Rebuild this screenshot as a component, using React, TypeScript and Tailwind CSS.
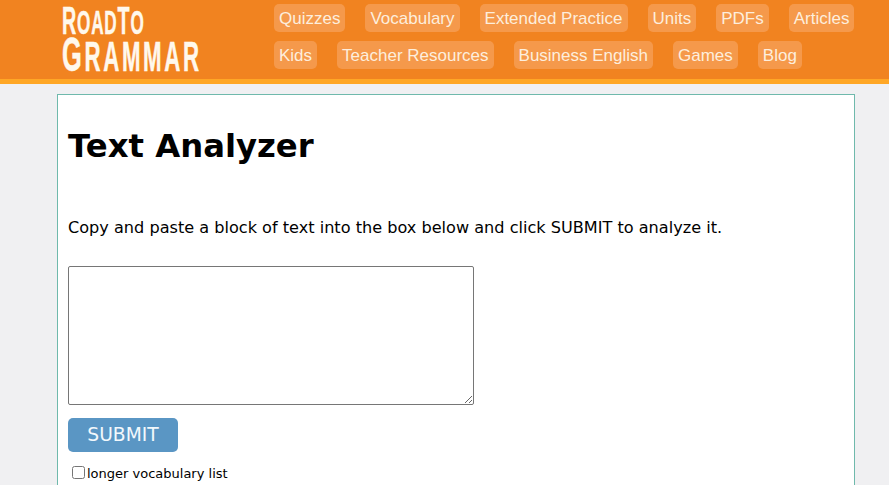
const links = [
  ['Quizzes', 'Vocabulary', 'Extended Practice', 'Units', 'PDFs', 'Articles'],
  ['Kids', 'Teacher Resources', 'Business English', 'Games', 'Blog'],
];

function Logo() {
  return (
    <div className="w-[212px] shrink-0 pt-[4px] text-[#fff8ec] font-['Liberation_Sans',sans-serif] font-bold [-webkit-text-stroke:0.5px_#fff8ec]">
      <div className="h-[32px] w-[138px] origin-top-left scale-x-[0.52] text-[38px] leading-[34px] tracking-[1.5px] whitespace-nowrap">
        <span>R</span>
        <span className="text-[33px]">OAD</span>
        <span>T</span>
        <span className="text-[33px]">O</span>
      </div>
      <div className="h-[38px] w-[138px] origin-top-left scale-x-[0.53] text-[48px] leading-[38px] tracking-[5px] whitespace-nowrap">
        <span>G</span>
        <span className="text-[42px]">RAMMAR</span>
      </div>
    </div>
  );
}

export default function App() {
  return (
    <div className="h-[485px] overflow-hidden bg-[#f0f0f2] font-['DejaVu_Sans',Verdana,sans-serif]">
      <header className="flex h-[84px] border-b-[5px] border-[#ffa726] bg-[#f18320] pl-[62px]">
        <Logo />
        <nav className="flex flex-col gap-[9px] pt-1 font-['Liberation_Sans',sans-serif] text-[17px] text-[#fdeedd]">
          {links.map((row, i) => (
            <div key={i} className="flex gap-[20px]">
              {row.map((l) => (
                <a key={l} className="flex h-7 items-center rounded-[5px] bg-[#f5994b] px-[5px] pt-px">
                  {l}
                </a>
              ))}
            </div>
          ))}
        </nav>
      </header>
      <main className="mx-[57px] mt-[10px] h-[500px] w-[798px] border border-[#6fb9ac] bg-white px-[10px] text-black">
        <h1 className="mt-[29px] text-[32.3px] leading-[44px] font-bold">Text Analyzer</h1>
        <p className="mt-[48px] text-[16.13px] leading-[24px]">
          Copy and paste a block of text into the box below and click SUBMIT to analyze it.
        </p>
        <textarea className="mt-[26px] block h-[139px] w-[406px] rounded-[2px] border border-[#767676] bg-white" />
        <button className="mt-[13px] block h-[34px] w-[110px] rounded-[5px] bg-[#5a96c4] text-[18.7px] text-[#f2f8fc]">
          SUBMIT
        </button>
        <label className="mt-[13px] flex items-center pl-1 text-[13px] leading-[18px]">
          <input type="checkbox" className="mr-[2px] mb-[3px] h-[13px] w-[13px]" />
          longer vocabulary list
        </label>
      </main>
    </div>
  );
}
